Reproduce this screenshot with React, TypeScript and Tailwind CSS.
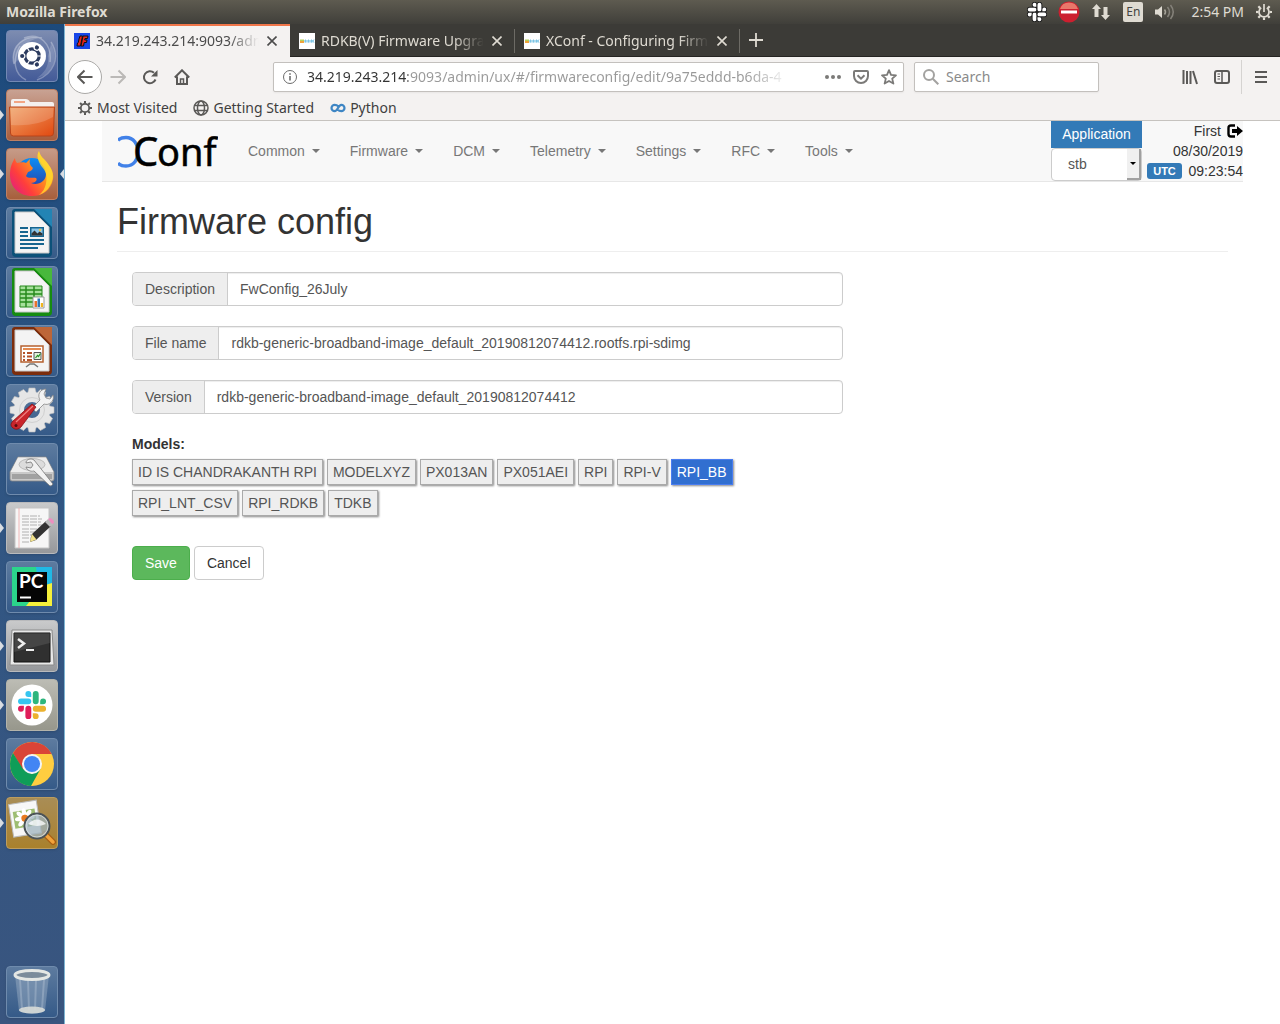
import { useState, type ReactNode } from "react";

const SLACK_ARM =
    "M5.042 15.165a2.528 2.528 0 0 1-2.52 2.523A2.528 2.528 0 0 1 0 15.165a2.527 2.527 0 0 1 2.522-2.52h2.52v2.52zM6.313 15.165a2.527 2.527 0 0 1 2.521-2.52 2.527 2.527 0 0 1 2.521 2.52v6.313A2.528 2.528 0 0 1 8.834 24a2.528 2.528 0 0 1-2.521-2.522v-6.313z";

const GEAR_ANGLES = [0, 45, 90, 135, 180, 225, 270, 315];

function SlackMark({ colors }: { colors: string[] }) {
    return (
        <>
            {colors.map((c, i) => (
                <path key={i} d={SLACK_ARM} fill={c} transform={`rotate(${i * 90} 12 12)`} />
            ))}
        </>
    );
}

/* ---------- launcher icons, all on a 52x52 tile ---------- */

function DashIcon() {
    return (
        <>
            <g fill="none" stroke="#fff" strokeOpacity=".3" strokeWidth="1.5">
                <path d="M8 34C4 16 18 4 36 8M45 12c10 16 2 32-14 38M20 50C8 44 6 30 14 16M18 8C34 2 46 14 44 32" />
            </g>
            <path d="M8 34C4 16 18 4 36 8c-12 0-20 8-20 18zM45 14c8 14 2 30-14 34 8-6 12-12 11-22z" fill="#fff" fillOpacity=".18" />
            <circle cx="26" cy="26" r="14" fill="#fff" />
            <circle cx="26" cy="26" r="7.2" fill="none" stroke="#2b3a5e" strokeWidth="3.2" />
            {[60, 180, 300].map((a) => (
                <g key={a} transform={`rotate(${a} 26 26)`}>
                    <circle cx="35.6" cy="26" r="3.1" fill="#fff" />
                    <circle cx="35.8" cy="26" r="2.1" fill="#2b3a5e" />
                    <path d="M16 26h4.600" stroke="#fff" strokeWidth="1.2" />
                </g>
            ))}
        </>
    );
}

function FilesIcon() {
    return (
        <>
            <path d="M5 12q0-2 2-2h13q2 0 3 1.500l1 1.500h22q2 0 2 2v8H5z" fill="#f4f0ee" />
            <path d="M8 12h11v2H8z" fill="#f2a583" />
            <path d="M3.500 18h45l-1 26q0 3-3 3h-37q-3 0-3-3z" fill="url(#folder)" stroke="#b8441a" />
            <path d="M4.500 19h43l-.5 9Q30 38 5 36z" fill="#fff" fillOpacity=".16" />
        </>
    );
}

function FirefoxIcon() {
    return (
        <>
            <circle cx="26" cy="27" r="17" fill="url(#ffblue)" />
            <path d="M33 3c1 6 6 8 9 13 4 5 6 10 5 15C45 42 37 48 26 48 13 48 4 39 4 27c0-8 2-12 5-17 0 2 1 4 2 5 4-1 8-1 9 0l4-4c-1 4 0 6 2 8 2 1 0 4-4 5l-2 4c2 3 7 1 10 2 2 2-1 5-5 5 6 3 15-1 15-9 0-5-3-8-5-11-4-5-4-9-2-12z" fill="url(#ffbody)" />
            <path d="M33 3c1 6 6 8 9 13 4 5 6 11 4 17-2 7-7 12-13 14 8-6 8-16 7-21-1-5-5-7-7-12-2-4-2-8 0-11z" fill="#ffd92e" fillOpacity=".8" />
        </>
    );
}

function DocIcon({ dark, light, children }: { dark: string; light: string; children: ReactNode }) {
    return (
        <>
            <path d="M9 2h30l7 7v37q0 4-4 4H10q-4 0-4-4V5q0-3 3-3z" fill={dark} />
            <path d="M28 2h18v18z" fill={light} />
            <path d="M9 5h19l15 15v26H9z" fill="#f4f4f4" stroke="#c8c8c8" />
            {children}
        </>
    );
}

function WriterArt() {
    return (
        <>
            <path d="M14 21h8M14 25h8M14 29h8M14 33h24M14 37h24M14 41h18" stroke="#17658f" strokeWidth="2" />
            <path d="M24 20h14v10H24z" fill="#17658f" />
            <path d="M25.500 21.500h11v7h-11z" fill="#8cc5e8" />
            <path d="M25.500 28.500v-2l3-3 3 3 2-2 3 2v2z" fill="#333" />
            <circle cx="34" cy="23" r="1.200" fill="#f4c84a" />
        </>
    );
}

function CalcArt() {
    return (
        <>
            <path d="M14 20h22v21H14z" fill="#a6e09b" stroke="#278a1d" />
            <path d="M14 24h22M14 28h22M14 32h22M14 36h22M20 20v21M28 20v21" stroke="#278a1d" strokeWidth="1.500" />
            <path d="M27 31h11v11H27z" fill="#fff" stroke="#999" />
            <path d="M28.500 35h2.500v6h-2.500z" fill="#e8722c" />
            <path d="M31.500 32.500H34V41h-2.500z" fill="#2f77b6" />
            <path d="M34.800 37H37v4h-2.200z" fill="#f0b51d" />
        </>
    );
}

function ImpressArt() {
    return (
        <>
            <path d="M15 21h22v16H15z" fill="#fff" stroke="#b5602f" strokeWidth="1.500" />
            <path d="M17 24h18" stroke="#e58a4f" strokeWidth="2" />
            <path d="M17 28h2M17 31.500h2M17 35h2M21 28h5M21 31.500h5M21 35h5" stroke="#b5532a" strokeWidth="2" />
            <path d="M28 27.500h7v7h-7z" fill="#e4f4df" stroke="#555" />
            <path d="m29.500 33 2-2.500 1 1 2-3" fill="none" stroke="#279427" strokeWidth="1.200" />
            <path d="m20 42 4-3h4l4 3" fill="none" stroke="#777" strokeWidth="1.500" />
        </>
    );
}

function SettingsIcon() {
    return (
        <>
            <g fill="#e6e6e6" stroke="#bdbdbd" strokeWidth=".6">
                {[0, 30, 60, 90, 120, 150, 180, 210, 240, 270, 300, 330].map((a) => (
                    <path key={a} d="M21.500 10 23 4h6l1.500 6z" transform={`rotate(${a} 26 26)`} />
                ))}
            </g>
            <circle cx="26" cy="26" r="13" fill="none" stroke="#e6e6e6" strokeWidth="10" />
            <circle cx="26" cy="26" r="12.500" fill="none" stroke="#d0d0d0" />
            <path d="m26 24 8-8c-3-5 0-11 6-11l-2 5 2 4 4 1 3-4c2 6-4 11-9 9l-8 8z" fill="#f3f3f3" stroke="#888" strokeWidth=".8" />
            <path d="m30 23-15 20q-4 4-8 1t0-7l19-17z" fill="#c9252b" stroke="#8b1014" strokeWidth=".8" />
            <path d="M27 22 10 38" stroke="#f08080" strokeWidth="1.200" />
            <circle cx="10" cy="41.500" r="1.500" fill="#5c0b0e" />
        </>
    );
}

function DisksIcon() {
    return (
        <>
            <path d="M4 29 12 14h28l8 15v7q0 2-2 2H6q-2 0-2-2z" fill="#c9c9c9" stroke="#888" strokeWidth=".8" />
            <path d="M4.500 29 12 14.500h28L47.500 29z" fill="#ededed" />
            <ellipse cx="26" cy="21.500" rx="13" ry="6" fill="#dcdcdc" stroke="#bbb" />
            <path d="M6 31h40v5H6z" fill="#555" fillOpacity=".35" />
            <path d="M20 20c0-4 5-5 8-3l4 5 15 19q-1 2-3 2L28 28c-4 1-7-1-8-4l5 1 2-3-2-3z" fill="#f2f2f2" stroke="#777" strokeWidth=".8" />
        </>
    );
}

function EditorIcon() {
    return (
        <>
            <path d="M9 6h34v40H9z" fill="#f6f6f6" stroke="#c4c4c4" />
            <path d="M13 6v40" stroke="#f0aaaa" strokeWidth=".8" />
            <path d="M16 14h18M16 17h20M16 20h19M16 23h20M16 27h16M16 30h14M16 33h15M16 36h10M16 40h7" stroke="#b0b0b0" strokeDasharray="7 1" />
            <path d="M24 40l2-8 14-13 5 5-15 14z" fill="#333" />
            <path d="m24 40 2-8 4.500 5.500z" fill="#f1e18b" />
            <path d="m39 20 3-3 5 5-3 3z" fill="#bbb" />
            <path d="m42 17 2-1q4 1 4 5l-2 1z" fill="#ec8fc0" />
        </>
    );
}

function PyCharmIcon() {
    return (
        <>
            <path d="M6 6h40v39H6z" fill="#2bd58b" />
            <path d="M30 6h16v18L34 38z" fill="#20b9e6" />
            <path d="M46 22v23H20l16-20z" fill="#f5f03a" />
            <path d="M11 11h30v30H11z" fill="#050505" />
            <path d="M14 36.500h11" stroke="#fff" strokeWidth="2" />
            <text x="13" y="27" fill="#fff" fontFamily="Lato, sans-serif" fontWeight="700" fontSize="19">PC</text>
        </>
    );
}

function TerminalIcon() {
    return (
        <>
            <path d="M6 10h40l2 35H4z" fill="#e9e9e9" stroke="#8a8a8a" />
            <path d="M8 13h36v29H8z" fill="#303030" stroke="#111" />
            <path d="M8 13h36v10L8 32z" fill="#fff" fillOpacity=".1" />
            <path d="m12 19 6 4.500-6 4.500" fill="none" stroke="#eee" strokeWidth="2.500" />
            <path d="M20 30h8" stroke="#eee" strokeWidth="2" />
        </>
    );
}

function SlackIcon() {
    return (
        <>
            <circle cx="26" cy="26" r="20.500" fill="#fff" />
            <g transform="translate(12 12) scale(1.170)">
                <SlackMark colors={["#e01e5a", "#36c5f0", "#2eb67d", "#ecb22e"]} />
            </g>
        </>
    );
}

function ChromeIcon() {
    return (
        <>
            <circle cx="26" cy="26" r="22" fill="#ffcd40" />
            <path d="M26 16h19.700A22 22 0 0 0 7 15l9.500 16.500z" fill="#da4437" />
            <path d="M7 15a22 22 0 0 0 18 33l9.500-17-8.500 5-9-5z" fill="#0f9d58" />
            <circle cx="26" cy="26" r="10" fill="#f4f4f4" />
            <circle cx="26" cy="26" r="8" fill="#4285f4" />
        </>
    );
}

function ViewerIcon() {
    return (
        <>
            <g transform="rotate(-9 20 22)">
                <path d="M5 5h28v33H5z" fill="#f7f7f7" stroke="#bbb" />
                <path d="M8 13h22v17H8z" fill="#9dbd72" />
                {GEAR_ANGLES.map((a) => (
                    <ellipse key={a} cx="19" cy="15.500" rx="2.200" ry="4.500" fill="#fff" transform={`rotate(${a} 19 21)`} />
                ))}
                <circle cx="19" cy="21" r="3.500" fill="#e77a1f" />
            </g>
            <path d="m39 37 8 8" stroke="#a65b12" strokeWidth="6" strokeLinecap="round" />
            <path d="m39 37 8 8" stroke="#f3a33a" strokeWidth="3.500" strokeLinecap="round" />
            <circle cx="31" cy="29" r="12.500" fill="#9fb3bd" fillOpacity=".75" stroke="#4c5357" strokeWidth="2" />
            <path d="M22 27q9-9 18 0-9 4-18 0z" fill="#fff" fillOpacity=".75" />
            <circle cx="31" cy="29" r="11" fill="none" stroke="#d8e1e5" strokeWidth=".8" />
        </>
    );
}

function TrashIcon() {
    return (
        <>
            <path d="M9 9 13 45q13 6 26 0L43 9z" fill="#a9bccd" fillOpacity=".4" />
            <path d="m14 14 2 29M38 14l-2 29M22 14l1 30M30 14l-1 30" stroke="#dfe8ef" strokeOpacity=".25" strokeWidth="2" />
            <ellipse cx="26" cy="44" rx="13" ry="3.500" fill="#d8dcd8" fillOpacity=".9" />
            <ellipse cx="26" cy="9" rx="17" ry="4.500" fill="#7b8c9b" stroke="#e4e7e4" strokeWidth="3" />
        </>
    );
}

type LauncherItem = { name: string; tile: string; icon: ReactNode; running?: boolean; focused?: boolean };

const clearTile = "bg-linear-to-b from-[#5d7b9f] to-[#355a88] border-[#6f8bad]";
const greyTile = "bg-linear-to-b from-[#c9cacb] to-[#96989b] border-[#b9babc]";

const launcher: LauncherItem[] = [
    { name: "Search your computer", tile: "bg-linear-to-b from-[#7d8cb0] to-[#445b98] border-[#7288b4]", icon: <DashIcon /> },
    { name: "Files", tile: "bg-linear-to-b from-[#c8a293] to-[#a85d3c] border-[#bd7f63]", icon: <FilesIcon />, running: true },
    { name: "Firefox", tile: "bg-linear-to-b from-[#c69b88] to-[#a75f3c] border-[#bd7f63]", icon: <FirefoxIcon />, running: true, focused: true },
    { name: "Writer", tile: clearTile, icon: <DocIcon dark="#0c5179" light="#2384b4"><WriterArt /></DocIcon> },
    { name: "Calc", tile: clearTile, icon: <DocIcon dark="#168c10" light="#48b83c"><CalcArt /></DocIcon> },
    { name: "Impress", tile: clearTile, icon: <DocIcon dark="#7c2d0c" light="#bd6638"><ImpressArt /></DocIcon> },
    { name: "System Settings", tile: clearTile, icon: <SettingsIcon /> },
    { name: "Disks", tile: clearTile, icon: <DisksIcon /> },
    { name: "Text Editor", tile: greyTile, icon: <EditorIcon />, running: true },
    { name: "PyCharm", tile: clearTile, icon: <PyCharmIcon /> },
    { name: "Terminal", tile: greyTile, icon: <TerminalIcon />, running: true },
    { name: "Slack", tile: "bg-linear-to-b from-[#bcbcb4] to-[#97978c] border-[#b4b4ab]", icon: <SlackIcon />, running: true },
    { name: "Chrome", tile: clearTile, icon: <ChromeIcon /> },
    { name: "Image Viewer", tile: "bg-linear-to-b from-[#a98d55] to-[#a9812c] border-[#bd9d5e]", icon: <ViewerIcon />, running: true },
];

const trash: LauncherItem = { name: "Trash", tile: clearTile, icon: <TrashIcon /> };

function LauncherTile({ item }: { item: LauncherItem }) {
    return (
        <div className="relative flex justify-center">
            {item.running && (
                <svg className="absolute left-0 top-5 h-3 w-1" viewBox="0 0 4 12"><path d="M0 1v10l4-5z" fill="#d9dde2" /></svg>
            )}
            <button type="button" aria-label={item.name} className={`size-[52px] overflow-hidden rounded-sm border shadow-sm ${item.tile}`}>
                <svg className="-m-px size-[52px]" viewBox="0 0 52 52">{item.icon}</svg>
            </button>
            {item.focused && (
                <svg className="absolute right-0 top-5 h-3 w-1" viewBox="0 0 4 12"><path d="M4 1v10L0 6z" fill="#d9dde2" /></svg>
            )}
        </div>
    );
}

function Launcher() {
    return (
        <nav aria-label="Launcher" className="flex w-[65px] shrink-0 flex-col gap-[7px] border-r border-[#7db4d2] bg-linear-to-b from-[#1c4a7c] via-[#315683] to-[#39557f] py-1.5">
            {/* shared gradients */}
            <svg className="absolute size-0" aria-hidden="true">
                <defs>
                    <linearGradient id="folder" x1="0" y1="0" x2="1" y2="1">
                        <stop offset="0" stopColor="#f0a469" />
                        <stop offset="1" stopColor="#e1480f" />
                    </linearGradient>
                    <linearGradient id="ffblue" x1="0" y1="0" x2="0" y2="1">
                        <stop offset="0" stopColor="#0b8df5" />
                        <stop offset="1" stopColor="#2b3aa0" />
                    </linearGradient>
                    <linearGradient id="ffbody" x1="1" y1="0" x2="0" y2=".8">
                        <stop offset="0" stopColor="#fff04a" />
                        <stop offset=".4" stopColor="#ff9a1a" />
                        <stop offset=".75" stopColor="#ff3f3b" />
                        <stop offset="1" stopColor="#e5217a" />
                    </linearGradient>
                </defs>
            </svg>
            {launcher.map((item) => (
                <LauncherTile key={item.name} item={item} />
            ))}
            <div className="mt-auto">
                <LauncherTile item={trash} />
            </div>
        </nav>
    );
}

/* ---------- desktop panel ---------- */

function Panel() {
    return (
        <header className="flex h-6 items-center bg-linear-to-b from-[#5e5b50] to-[#403f3a] pl-1.5 pr-2 text-[#dfdbd2]">
            <span className="text-sm font-bold">Mozilla Firefox</span>
            <div className="ml-auto flex items-center gap-3">
                <svg className="size-5" viewBox="-1 -1 26 26">
                    <g stroke="#222" strokeWidth="2.500" paintOrder="stroke"><SlackMark colors={["#fff", "#fff", "#fff", "#fff"]} /></g>
                </svg>
                <svg className="size-5 overflow-visible" viewBox="0 0 20 20">
                    <circle cx="10" cy="10" r="10.500" fill="#cc1f2f" />
                    <path d="M1 7a9.500 9.500 0 0 1 18 0z" fill="#e8776a" />
                    <path d="M2 8.500h16v3H2z" fill="#fff" />
                </svg>
                <svg className="size-5" viewBox="0 0 20 20" fill="#dfdbd2">
                    <path d="M5.500 2 10 7H7.500v8h-4V7H1zM14.500 18 19 13h-2.500V5h-4v8H10z" />
                </svg>
                <span className="flex h-5 w-5 items-center justify-center rounded-xs bg-[#dfdbd2] text-xs text-[#45443f]">En</span>
                <svg className="size-5" viewBox="0 0 20 20" fill="none">
                    <path d="M0 7.500h3L7 4v12l-4-3.500H0z" fill="#dfdbd2" />
                    <path d="M9.500 7.500q2 2.500 0 5" stroke="#a5a298" strokeWidth="1.500" />
                    <path d="M12.500 5q4 5 0 10M15.500 3q5.500 7 0 14" stroke="#85827a" strokeWidth="1.500" />
                </svg>
                <span className="mx-1 text-sm">2:54 PM</span>
                <svg className="-ml-1 size-4 overflow-visible" viewBox="0 0 16 16" fill="none" stroke="#dfdbd2">
                    <path d="M5.200 3.800a5 5 0 1 0 5.600 0" strokeWidth="1.700" />
                    <path d="M8 0v8" strokeWidth="1.700" />
                    {[45, 90, 135, 180, 225, 270, 315].map((a) => (
                        <path key={a} d="M8 0v2.500" strokeWidth="2.200" transform={`rotate(${a} 8 8)`} />
                    ))}
                </svg>
            </div>
        </header>
    );
}

/* ---------- browser chrome ---------- */

function XConfFavicon() {
    return (
        <svg className="size-4 shrink-0" viewBox="0 0 16 16">
            <path d="M0 0h16v16H0z" fill="#1846e8" />
            <path d="M6 3h2.500L6.500 13H3l.5-3 .8-.5L5 6z" fill="#e8261c" stroke="#111" />
            <path d="M9 3h5l-.5 2.500h-2.500L10.700 7H13l-.5 2.500h-2.300L9.500 13H7z" fill="#e8261c" stroke="#111" />
        </svg>
    );
}

function RdkFavicon() {
    return (
        <svg className="size-4 shrink-0" viewBox="0 0 16 16">
            <path d="M0 0h16v16H0z" fill="#fff" />
            <path d="M1 6.500h4v1.500H1z" fill="#b5cf5a" />
            <path d="M1 8h4v2H1z" fill="#f0a33c" />
            <path d="M5 7h10v2.500H5z" fill="#7cc4e4" fillOpacity=".6" />
            <path d="M6.500 9.500v-3M9.500 6.500v3M12.500 6.500v3M15 6.500 13.500 8l1.500 1.500" fill="none" stroke="#7cc4e4" />
        </svg>
    );
}

const tabs = [
    { title: "34.219.243.214:9093/adm", icon: <XConfFavicon />, active: true },
    { title: "RDKB(V) Firmware Upgra", icon: <RdkFavicon /> },
    { title: "XConf - Configuring Firmw", icon: <RdkFavicon /> },
];

function TabStrip() {
    return (
        <div className="flex h-[33px] items-stretch border-b border-[#252422] bg-[#3c3b37]">
            {tabs.map((tab) => (
                <div
                    key={tab.title}
                    className={`-mb-px flex w-[225px] items-center pl-[9px] ${tab.active ? "border-t-2 border-[#f0764a] bg-[#f4f2f1] pb-0.5 text-[#4c4c4c]" : "text-[#dfdbd2]"}`}
                >
                    {tab.icon}
                    <span className="ml-1.5 min-w-0 flex-1 overflow-hidden whitespace-nowrap text-sm [mask-image:linear-gradient(to_right,black_80%,transparent_98%)]">
                        {tab.title}
                    </span>
                    <button type="button" aria-label="Close tab" className="flex size-5 items-center justify-center">
                        <svg className="size-2.5" viewBox="0 0 10 10" stroke="currentColor" strokeWidth="1.600"><path d="m.5.5 9 9M9.500.5l-9 9" /></svg>
                    </button>
                    <span className={`ml-[7px] h-6 w-px ${tab.active ? "" : "bg-[#6d6b65]"}`} />
                </div>
            ))}
            <button type="button" aria-label="New tab" className="flex w-8 items-center justify-center text-[#dfdbd2]">
                <svg className="size-3.5" viewBox="0 0 14 14" stroke="currentColor" strokeWidth="1.800"><path d="M7 0v14M0 7h14" /></svg>
            </button>
        </div>
    );
}

function ToolButton({ label, children, className = "" }: { label: string; children: ReactNode; className?: string }) {
    return (
        <button type="button" aria-label={label} className={`flex shrink-0 items-center justify-center ${className || "size-8"}`}>
            <svg className="size-4" viewBox="0 0 16 16" fill="none" stroke="currentColor" strokeWidth="2">{children}</svg>
        </button>
    );
}

function Toolbar() {
    return (
        <div className="flex h-10 items-center px-[3px] text-[#5a5957]">
            <ToolButton label="Back" className="size-[34px] rounded-full border border-[#aaa9a7] bg-white">
                <path d="M15.500 8H1.500M7.500 1.500 1 8l6.500 6.500" />
            </ToolButton>
            <ToolButton label="Forward" className="size-8 text-[#bbb9b7]"><path d="M.5 8h14M8.500 1.500 15 8l-6.500 6.500" /></ToolButton>
            <ToolButton label="Reload">
                <path d="M13.500 10.500A6 6 0 1 1 12 3.800" />
                <path d="M15.500 1v6.500H9z" fill="currentColor" stroke="none" />
            </ToolButton>
            <ToolButton label="Home">
                <path d="M.8 8.500 8 1.300l7.200 7.200M3 7.500V15h10V7.500" />
                <path d="M6.500 15v-5h3v5z" strokeWidth="1.500" />
            </ToolButton>

            <div className="ml-[75px] flex h-[30px] flex-1 items-center rounded-xs border border-[#c3c0bd] bg-white pl-2 pr-1.5 shadow-xs">
                <svg className="size-4 shrink-0" viewBox="0 0 16 16" fill="none" stroke="#6b6b6b">
                    <circle cx="8" cy="8" r="6.500" />
                    <path d="M8 7v4.500M8 4.200v1.500" strokeWidth="1.600" />
                </svg>
                {/* host is dark, path is light and fades out on the right */}
                <input
                    aria-label="Address"
                    readOnly
                    value="34.219.243.214:9093/admin/ux/#/firmwareconfig/edit/9a75eddd-b6da-4"
                    className="ml-[9px] min-w-0 flex-1 bg-[linear-gradient(to_right,#333_101px,#999_101px,#999_440px,transparent_482px)] bg-clip-text text-sm text-transparent outline-none"
                />
                <div className="ml-8 flex items-center gap-3 text-[#7b7a78]">
                    <svg className="size-4" viewBox="0 0 16 16" fill="currentColor"><circle cx="2" cy="8" r="2" /><circle cx="8" cy="8" r="2" /><circle cx="14" cy="8" r="2" /></svg>
                    <svg className="size-4" viewBox="0 0 16 16" fill="none" stroke="currentColor" strokeWidth="2">
                        <path d="M2 2h12q1 0 1 1v4a7 7 0 0 1-14 0V3q0-1 1-1z" />
                        <path d="M4.500 6.200 8 9.600l3.500-3.400" />
                    </svg>
                    <svg className="size-4" viewBox="0 0 16 16" fill="none" stroke="currentColor" strokeWidth="1.800" strokeLinejoin="round">
                        <path d="m8 1.200 2 4.700 5 .4-3.800 3.300 1.200 5L8 12l-4.400 2.600 1.200-5L1 6.300l5-.4z" />
                    </svg>
                </div>
            </div>

            <div className="ml-2.5 flex h-[30px] w-[185px] items-center rounded-xs border border-[#c3c0bd] bg-white pl-2 shadow-xs">
                <svg className="size-4 shrink-0" viewBox="0 0 16 16" fill="none" stroke="#a3a2a0" strokeWidth="2"><circle cx="6" cy="6" r="5" /><path d="m9.800 9.800 5.500 5.500" /></svg>
                <input aria-label="Search" placeholder="Search" className="ml-[7px] w-full min-w-0 text-sm outline-none placeholder:text-[#8a8a8a]" />
            </div>

            <div className="ml-[75px] flex items-center">
                <ToolButton label="Library">
                    <path d="M1.500 1v14M5 2v13M8.500 2v13M11 2l4 13" />
                </ToolButton>
                <ToolButton label="Sidebars">
                    <rect x="1" y="2" width="14" height="12" rx="2" />
                    <path d="M8 2v12" strokeWidth="1.500" />
                    <path d="M3.500 5H6M3.500 7.500H6M3.500 10H6" strokeWidth="1" />
                </ToolButton>
                <span className="mx-[3px] h-[34px] w-px bg-[#d5d3d1]" />
                <ToolButton label="Menu"><path d="M2 3h12M2 8h12M2 13h12" /></ToolButton>
            </div>
        </div>
    );
}

function Bookmarks() {
    return (
        <div className="flex h-6 items-center gap-4 border-b border-[#c6c3bf] pb-0.5 pl-3 text-sm text-[#3f3f3f]">
            <a href="#most-visited" className="flex items-center gap-1">
                <svg className="size-4" viewBox="0 0 16 16" fill="none" stroke="#5a5957">
                    <circle cx="8" cy="8" r="4.200" strokeWidth="1.800" />
                    {GEAR_ANGLES.map((a) => (
                        <path key={a} d="M8 1v2.500" strokeWidth="2" transform={`rotate(${a} 8 8)`} />
                    ))}
                </svg>
                Most Visited
            </a>
            <a href="#getting-started" className="flex items-center gap-1">
                <svg className="size-4" viewBox="0 0 16 16" fill="none" stroke="#5a5957" strokeWidth="1.500">
                    <circle cx="8" cy="8" r="7" />
                    <ellipse cx="8" cy="8" rx="3.500" ry="7" />
                    <path d="M1.500 5.500h13M1.500 10.500h13" />
                </svg>
                Getting Started
            </a>
            <a href="#python" className="flex items-center gap-1">
                <svg className="size-4" viewBox="0 0 16 16" fill="none" stroke="#3f86c4" strokeWidth="2.200">
                    <path d="M8.500 6.500Q6.800 4.800 4.700 4.800a3.200 3.200 0 0 0 0 6.400c3 0 3.600-6.400 6.600-6.400a3.200 3.200 0 0 1 0 6.400Q9.200 11.200 7.500 9.500" />
                </svg>
                Python
            </a>
        </div>
    );
}

/* ---------- XConf page ---------- */

const menus = ["Common", "Firmware", "DCM", "Telemetry", "Settings", "RFC", "Tools"];

const models = [
    "ID IS CHANDRAKANTH RPI",
    "MODELXYZ",
    "PX013AN",
    "PX051AEI",
    "RPI",
    "RPI-V",
    "RPI_BB",
    "RPI_LNT_CSV",
    "RPI_RDKB",
    "TDKB",
];

function Navbar() {
    return (
        <nav className="flex h-[61px] items-start border-b border-[#e7e7e7] bg-[#f8f8f8]">
            <a href="#home" aria-label="XConf" className="ml-4">
                <svg className="h-[60px] w-[100px]" viewBox="0 0 100 60">
                    <path d="M0 19.500Q2.500 16.500 8 16.500C15.500 16.500 20 23 20 31S15.500 45 8 45Q2.500 45 0 42" fill="none" stroke="#4181e8" strokeWidth="3.500" />
                    <g fontFamily="Noto Sans, sans-serif" stroke="#000" strokeWidth=".5">
                        <text x="15" y="45" fontSize="40">C</text>
                        <text x="39" y="45" fontSize="38">onf</text>
                    </g>
                </svg>
            </a>
            <ul className="flex pl-[15px]">
                {menus.map((m) => (
                    <li key={m}>
                        <a href={`#${m.toLowerCase()}`} className="flex h-[60px] items-center px-[15px] text-[#777]">
                            {m}
                            <span className="ml-[7px] border-x-4 border-t-4 border-x-transparent border-t-[#777]" />
                        </a>
                    </li>
                ))}
            </ul>
            <div className="ml-auto flex gap-[5px]">
                <div className="w-[91px]">
                    <label htmlFor="application" className="block h-[27px] bg-[#337ab7] text-center leading-[27px] text-white">Application</label>
                    <div className="relative">
                        <select id="application" className="block h-[33px] w-full appearance-none rounded-sm border border-[#ccc] bg-white pb-0.5 pl-4 text-[#555]">
                            <option>stb</option>
                        </select>
                        <span className="pointer-events-none absolute right-px top-px flex h-[31px] w-[14px] items-center justify-center border-b-2 border-r-2 border-[#a0a0a0] bg-[#f0f0f0]">
                            <span className="border-x-[3px] border-t-[3px] border-x-transparent border-t-black" />
                        </span>
                    </div>
                </div>
                <div className="w-24 text-right">
                    <div className="flex items-center justify-end gap-1.5">
                        First
                        <svg className="size-4 text-black" viewBox="0 0 16 16" aria-label="Log out">
                            <path d="M8 2.500H4Q1.500 2.500 1.500 5v6Q1.500 13.500 4 13.500h4" fill="none" stroke="currentColor" strokeWidth="2.400" />
                            <path d="M5 6h5V3l6 5-6 5v-3H5z" fill="currentColor" />
                        </svg>
                    </div>
                    <div>08/30/2019</div>
                    <div className="flex items-center justify-between">
                        <span className="w-[35px] rounded-[3px] bg-[#337ab7] text-center text-[11px]/4 font-bold text-white">UTC</span>
                        09:23:54
                    </div>
                </div>
            </div>
        </nav>
    );
}

function Field({ id, label, value }: { id: string; label: string; value: string }) {
    return (
        <div className="flex h-[34px] rounded-sm border border-[#ccc] shadow-[inset_0_1px_1px_rgba(0,0,0,0.075)]">
            <label htmlFor={id} className="flex items-center rounded-l-[3px] border-r border-[#ccc] bg-[#eee] px-3 text-[#555]">{label}</label>
            <input id={id} defaultValue={value} className="min-w-0 flex-1 px-3 text-[#555] outline-none" />
        </div>
    );
}

function FirmwareConfigForm() {
    const [selected, setSelected] = useState(["RPI_BB"]);

    const toggle = (m: string) =>
        setSelected((prev) => (prev.includes(m) ? prev.filter((x) => x !== m) : [...prev, m]));

    return (
        <form className="w-2/3 px-[15px]" onSubmit={(e) => e.preventDefault()}>
            <div className="flex flex-col gap-5">
                <Field id="description" label="Description" value="FwConfig_26July" />
                <Field id="filename" label="File name" value="rdkb-generic-broadband-image_default_20190812074412.rootfs.rpi-sdimg" />
                <Field id="version" label="Version" value="rdkb-generic-broadband-image_default_20190812074412" />
                <div role="group" aria-labelledby="models-label">
                    <div id="models-label" className="font-bold">Models:</div>
                    <div className="mt-[5px] flex flex-wrap gap-x-1 gap-y-[5px]">
                        {models.map((m) => (
                            <button
                                key={m}
                                type="button"
                                aria-pressed={selected.includes(m)}
                                onClick={() => toggle(m)}
                                className={`h-[26px] border px-[5px] shadow-[1px_1px_2px_#888] ${selected.includes(m) ? "border-[#4a7df0] bg-[#316fd0] text-white" : "border-[#aaa] bg-[#eee] text-[#555]"}`}
                            >
                                {m}
                            </button>
                        ))}
                    </div>
                </div>
            </div>
            <div className="mt-[30px] flex gap-1">
                <button type="submit" className="h-[34px] rounded-sm border border-[#4cae4c] bg-[#5cb85c] px-3 text-white">Save</button>
                <button type="button" className="h-[34px] rounded-sm border border-[#ccc] bg-white px-3 text-[#333]">Cancel</button>
            </div>
        </form>
    );
}

export default function App() {
    return (
        <div className="flex min-h-screen flex-col bg-white font-['Noto_Sans',sans-serif]">
            <Panel />
            <div className="flex flex-1">
                <Launcher />
                <div className="flex min-w-0 flex-1 flex-col">
                    <div className="bg-[#f4f2f1]">
                        <TabStrip />
                        <Toolbar />
                        <Bookmarks />
                    </div>
                    <main className="mx-auto w-full max-w-[1141px] font-['Liberation_Sans',Arial,sans-serif] text-sm/5 text-[#333]">
                        <Navbar />
                        <div className="px-[15px]">
                            <h1 className="mb-5 mt-5 border-b border-[#eee] pb-[9px] text-4xl/10">Firmware config</h1>
                            <FirmwareConfigForm />
                        </div>
                    </main>
                </div>
            </div>
        </div>
    );
}
